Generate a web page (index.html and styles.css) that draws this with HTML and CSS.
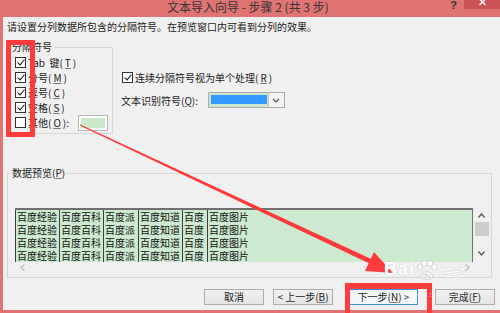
FILE: index.html
```html
<!DOCTYPE html>
<html lang="zh-CN">
<head>
  <meta charset="UTF-8" />
  <title>文本导入向导 - 步骤 2 (共 3 步)</title>
  <link rel="stylesheet" href="styles.css">
</head>
<body>
  <div class="window">
    <div class="titlebar">
      <span class="title">文本导入向导 - 步骤 2 (共 3 步)</span>
      <span class="help">?</span>
      <span class="close">
        <svg width="7" height="6" viewBox="0 0 7 6"><path d="M0.5 -1 L6.5 5 M6.5 -1 L0.5 5" stroke="#fff" stroke-width="1.3" fill="none"/></svg>
      </span>
    </div>

    <div class="client">
      <p class="intro">请设置分列数据所包含的分隔符号。在预览窗口内可看到分列的效果。</p>

      <div class="options">
        <fieldset class="group delims">
          <legend>分隔符号</legend>
          <label class="check"><span class="cb on"></span>Tab&nbsp; 键(<u>T</u>)</label>
          <label class="check"><span class="cb on"></span>分号(<u>M</u>)</label>
          <label class="check"><span class="cb on"></span>逗号(<u>C</u>)</label>
          <label class="check"><span class="cb on"></span>空格(<u>S</u>)</label>
          <label class="check"><span class="cb"></span>其他(<u>O</u>):<span class="other-box"></span></label>
        </fieldset>

        <div class="side">
          <label class="check"><span class="cb on"></span>连续分隔符号视为单个处理(<u>R</u>)</label>
          <div class="qualifier">
            <span>文本识别符号(<u>Q</u>):</span>
            <div class="combo">
              <span class="combo-value"></span>
              <span class="combo-arrow">
                <svg width="8" height="5" viewBox="0 0 8 5"><path d="M1 1 L4 4 L7 1" stroke="#555" stroke-width="1.2" fill="none"/></svg>
              </span>
            </div>
          </div>
        </div>
      </div>

      <fieldset class="group preview">
        <legend>数据预览(<u>P</u>)</legend>
        <div class="preview-body">
          <div class="grid">
            <div class="grid-row"><span>百度经验</span><span>百度百科</span><span>百度派</span><span>百度知道</span><span>百度</span><span>百度图片</span></div>
            <div class="grid-row"><span>百度经验</span><span>百度百科</span><span>百度派</span><span>百度知道</span><span>百度</span><span>百度图片</span></div>
            <div class="grid-row"><span>百度经验</span><span>百度百科</span><span>百度派</span><span>百度知道</span><span>百度</span><span>百度图片</span></div>
            <div class="grid-row"><span>百度经验</span><span>百度百科</span><span>百度派</span><span>百度知道</span><span>百度</span><span>百度图片</span></div>
          </div>
          <div class="vscroll">
            <svg width="7" height="5" viewBox="0 0 7 5"><path d="M0.5 4.5 L3.5 1 L6.5 4.5" stroke="#555" stroke-width="1.2" fill="none"/></svg>
            <span class="thumb"></span>
            <svg class="down" width="7" height="5" viewBox="0 0 7 5"><path d="M0.5 0.5 L3.5 4 L6.5 0.5" stroke="#555" stroke-width="1.2" fill="none"/></svg>
          </div>
        </div>
        <div class="hscroll">
          <svg width="5" height="7" viewBox="0 0 5 7"><path d="M4.5 0.5 L1 3.5 L4.5 6.5" stroke="#c2b4b4" stroke-width="1.2" fill="none"/></svg>
          <svg width="5" height="7" viewBox="0 0 5 7"><path d="M0.5 0.5 L4 3.5 L0.5 6.5" stroke="#c2b4b4" stroke-width="1.2" fill="none"/></svg>
        </div>
      </fieldset>

      <div class="buttons">
        <button class="btn">取消</button>
        <button class="btn back">&lt; 上一步(<u>B</u>)</button>
        <button class="btn next">下一步(<u>N</u>) &gt;</button>
        <button class="btn">完成(<u>F</u>)</button>
      </div>
    </div>

    <!-- annotations drawn over the dialog -->
    <svg class="arrow" width="500" height="313" viewBox="0 0 500 313">
      <polygon points="80.3,124.5 373,259.7 370.9,264.3 79.7,125.5" fill="#ff3b3b"/>
      <polygon points="365,271 374,252 393,273" fill="#ff3b3b"/>
    </svg>
    <div class="mark mark-delims"></div>
    <div class="mark mark-next"></div>

    <div class="watermark">
      <span class="wm-bai">Bai</span>
      <svg class="wm-paw" width="22" height="20" viewBox="0 0 22 20">
        <ellipse cx="4" cy="7" rx="2.6" ry="3.2" fill="#fff" stroke="#c8c8c8" stroke-width="0.8"/>
        <ellipse cx="8.5" cy="3.4" rx="2.6" ry="3" fill="#fff" stroke="#c8c8c8" stroke-width="0.8"/>
        <ellipse cx="14" cy="3.4" rx="2.6" ry="3" fill="#fff" stroke="#c8c8c8" stroke-width="0.8"/>
        <ellipse cx="18.4" cy="7" rx="2.6" ry="3.2" fill="#fff" stroke="#c8c8c8" stroke-width="0.8"/>
        <path d="M5 17 C5 10 17 10 17 17 C17 20 5 20 5 17 Z" fill="#fff" stroke="#c8c8c8" stroke-width="0.8"/>
        <text x="11" y="17.5" text-anchor="middle" font-family="Liberation Sans, sans-serif" font-size="7" font-weight="bold" fill="#d4d4d4">du</text>
      </svg>
      <span class="wm-jy">经验</span>
      <span class="wm-url">jingyan.baidu.com</span>
    </div>
  </div>
</body>
</html>
```

FILE: styles.css
```css
/* Reset */
* {
  margin: 0;
  padding: 0;
  box-sizing: border-box;
}

body {
  font-family: "Noto Sans CJK SC", "Liberation Sans", sans-serif;
  font-size: 10px;
  color: #1b1b1b;
  background: #f0f0f0;
}

u {
  text-decoration: underline;
  text-decoration-color: #777;
  text-underline-offset: 1px;
}

.window {
  position: relative;
  width: 500px;
  height: 313px;
  overflow: hidden;
  display: flex;
  flex-direction: column;
  background: #f0f0f0;
}

/* Title bar */
.titlebar {
  height: 17px;
  flex-shrink: 0;
  background: #e07373;
  display: flex;
  align-items: flex-start;
}

.titlebar .title {
  margin-left: 167px;
  font-size: 12px;
  line-height: 13px;
  color: #3b3333;
  white-space: nowrap;
}

.titlebar .help {
  margin-left: auto;
  margin-right: 7px;
  font-family: "Liberation Sans", sans-serif;
  font-size: 11px;
  font-weight: 700;
  line-height: 10px;
  color: #333;
}

.titlebar .close {
  width: 36px;
  height: 9px;
  background: #cc5353;
  display: flex;
  justify-content: center;
  align-items: flex-start;
}

/* Dialog client area */
.client {
  flex: 1;
  border-left: 3px solid #e07373;
  border-bottom: 3px solid #e07373;
  padding: 0 5px 0 4px;
  display: flex;
  flex-direction: column;
}

.intro {
  margin-top: 3px;
  line-height: 14px;
  white-space: nowrap;
}

.options {
  display: flex;
  align-items: flex-start;
  margin-top: 7px;
}

.group {
  border: 1px solid #d6d6d6;
  min-width: 0;
}

.group legend {
  line-height: 12px;
  padding: 0 2px;
}

.delims {
  width: 105px;
  margin-left: 1px;
  padding: 2px 4px 3px 6px;
}

.delims legend {
  margin-left: -5px;
}

.check {
  display: flex;
  align-items: center;
  gap: 2px;
  height: 15px;
  white-space: nowrap;
}

.cb {
  position: relative;
  width: 11px;
  height: 11px;
  flex-shrink: 0;
  border: 1px solid #333;
  background: #fff;
}

.cb.on::after {
  content: "";
  position: absolute;
  left: 3px;
  top: 0;
  width: 3px;
  height: 6px;
  border: solid #111;
  border-width: 0 1.6px 1.6px 0;
  transform: rotate(40deg);
}

.other-box {
  margin-left: auto;
  width: 30px;
  height: 16px;
  border: 1px solid #b9b9b9;
  background: #cbe8cb;
  box-shadow: inset 0 0 0 2px #fff;
}

.side {
  margin-left: 9px;
  padding-top: 29px;
}

.qualifier {
  display: flex;
  align-items: center;
  height: 16px;
  margin-top: 7px;
  margin-left: -1px;
  white-space: nowrap;
}

.combo {
  display: flex;
  width: 77px;
  height: 16px;
  margin-left: 10px;
  border: 1px solid #acacac;
  background: #cde7cd;
}

.combo-value {
  flex: 1;
  margin: 2px 1px 3px 2px;
  background: #3399ff;
}

.combo-arrow {
  width: 16px;
  border-left: 1px solid #c4c4c4;
  background: #f3f3f3;
  display: flex;
  align-items: center;
  justify-content: center;
}

/* Data preview */
.preview {
  width: 485px;
  margin-top: 33px;
  padding: 29px 1px 5px 7px;
}

.preview legend {
  margin-left: -4px;
  padding: 0 1px;
}

.preview-body {
  display: flex;
  height: 54px;
}

.grid {
  flex: 1;
  overflow: hidden;
  background: #cde9d0;
  border-top: 2px solid #707070;
  border-right: 1px solid #707070;
}

.grid-row {
  display: grid;
  grid-template-columns: 44px 44px 35px 44px 25px 1fr;
  line-height: 13px;
  color: #111;
}

.grid-row span {
  border-left: 1px solid #3e3e3e;
  padding-left: 1px;
  white-space: nowrap;
  overflow: hidden;
}

.vscroll {
  width: 17px;
  display: flex;
  flex-direction: column;
  align-items: center;
  padding: 5px 0 6px;
}

.vscroll .thumb {
  width: 14px;
  height: 14px;
  margin-top: 4px;
  background: #cdcdcd;
}

.vscroll .down {
  margin-top: auto;
}

.hscroll {
  height: 10px;
  display: flex;
  align-items: center;
  justify-content: space-between;
  padding: 0 20px 0 5px;
}

/* Wizard buttons */
.buttons {
  display: flex;
  justify-content: flex-end;
  margin-top: 11px;
}

.btn {
  width: 60px;
  height: 16px;
  margin-left: 9px;
  border: 1px solid #acacac;
  background: linear-gradient(#f0f0f0, #e5e5e5);
  font-family: inherit;
  font-size: 10px;
  line-height: 14px;
  color: #1b1b1b;
}

.btn.next {
  width: 69px;
  margin-left: 16px;
  margin-right: 8px;
  border-color: #3d8fdb;
  background: #f3f6f9;
}

/* Annotations */
.arrow {
  position: absolute;
  left: 0;
  top: 0;
  pointer-events: none;
}

.mark {
  position: absolute;
  border: 5px solid #ff3b3b;
}

.mark-delims {
  left: 6px;
  top: 40px;
  width: 29px;
  height: 97px;
}

.mark-next {
  left: 345px;
  top: 283px;
  width: 87px;
  height: 40px;
  border-width: 6px 5px 0 5px;
}

.watermark {
  position: absolute;
  left: 384px;
  top: 259px;
  display: flex;
  align-items: center;
  pointer-events: none;
}

.wm-bai {
  font-family: "Liberation Sans", sans-serif;
  font-size: 18px;
  font-weight: 700;
  letter-spacing: 1px;
  color: #fff;
  text-shadow: 0 0 1px #b5b5b5;
}

.wm-paw {
  margin: 0 1px 0 1px;
}

.wm-jy {
  font-size: 14px;
  color: #fff;
  text-shadow: 0 0 1px #b5b5b5;
}

.wm-url {
  position: absolute;
  left: 18px;
  top: 31px;
  font-family: "Liberation Sans", sans-serif;
  font-size: 8px;
  color: rgba(255, 255, 255, 0.35);
}
```
